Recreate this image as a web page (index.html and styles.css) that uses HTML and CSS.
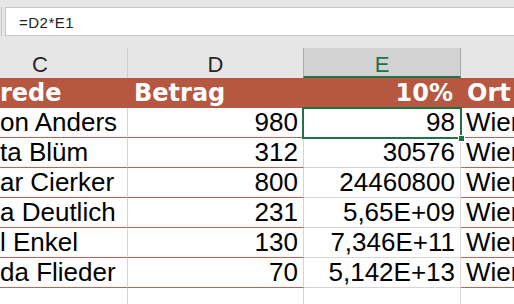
FILE: index.html
```html
<!DOCTYPE html>
<html>

<head>
    <meta charset="utf-8">
    <title>Tabelle</title>
    <link rel="stylesheet" href="styles.css">
</head>

<body>
    <div class="top">
        <div class="fx-edge"></div>
        <div class="formula">=D2*E1</div>
    </div>
    <div class="sheet">
        <div class="hd">C</div>
        <div class="hd">D</div>
        <div class="hd active">E</div>
        <div class="hd last"></div>

        <div class="cell title c">rede</div>
        <div class="cell title d">Betrag</div>
        <div class="cell title e">10%</div>
        <div class="cell title f">Ort</div>

        <div class="cell c">on Anders</div>
        <div class="cell d">980</div>
        <div class="cell e sel">98<span class="frame"><i class="handle"></i></span></div>
        <div class="cell f">Wien</div>

        <div class="cell c">ta Blüm</div>
        <div class="cell d">312</div>
        <div class="cell e">30576</div>
        <div class="cell f">Wien</div>

        <div class="cell c">ar Cierker</div>
        <div class="cell d">800</div>
        <div class="cell e">24460800</div>
        <div class="cell f">Wien</div>

        <div class="cell c">a Deutlich</div>
        <div class="cell d">231</div>
        <div class="cell e">5,65E+09</div>
        <div class="cell f">Wien</div>

        <div class="cell c">l Enkel</div>
        <div class="cell d">130</div>
        <div class="cell e">7,346E+11</div>
        <div class="cell f">Wien</div>

        <div class="cell c">da Flieder</div>
        <div class="cell d">70</div>
        <div class="cell e">5,142E+13</div>
        <div class="cell f">Wien</div>

        <div class="cell empty"></div>
        <div class="cell empty"></div>
        <div class="cell empty"></div>
        <div class="cell empty"></div>
    </div>
</body>

</html>
```

FILE: styles.css
```css
body {
    margin: 0;
    padding: 0;
    background: #fff;
    overflow: hidden;
    font-family: "Liberation Sans", Arial, sans-serif;
}

.top {
    display: flex;
    background: #e6e6e6;
    padding: 7px 0 12px 0;
}

.fx-edge {
    width: 1px;
    height: 29px;
    border-right: 1px solid #c6c6c6;
    margin-right: 3px;
}

.formula {
    flex: 1;
    box-sizing: border-box;
    height: 29px;
    line-height: 27px;
    padding: 1px 0 0 13px;
    background: #fff;
    border: 1px solid #c6c6c6;
    border-right: none;
    font-size: 15px;
    letter-spacing: 0.5px;
    color: #222;
}

.sheet {
    display: grid;
    grid-template-columns: 175px 176px 157px 120px;
    margin-left: -47px;
}

.hd {
    height: 30px;
    line-height: 34px;
    background: #e6e6e6;
    border-right: 1px solid #cdcdcd;
    text-align: center;
    font-size: 22px;
    color: #262626;
    overflow: hidden;
}

.hd.active {
    box-sizing: border-box;
    background: #d2d2d2;
    border-left: 1px solid #ababab;
    border-right: 1px solid #ababab;
    border-bottom: 2px solid #217346;
    margin-left: -1px;
    color: #217346;
}

.hd.last {
    border-right: none;
}

.cell {
    height: 29px;
    line-height: 29px;
    font-size: 26px;
    color: #000;
    white-space: nowrap;
    overflow: hidden;
    border-right: 1px solid #d4d4d4;
    border-bottom: 1px solid #c0634c;
}

.cell.e {
    border-bottom-color: #d4d4d4;
}

.cell.f {
    border-right: none;
}

.cell.c {
    padding-left: 47px;
}

.cell.d {
    text-align: right;
    padding-right: 5px;
}

.cell.e {
    text-align: right;
    padding-right: 5px;
}

.cell.f {
    padding-left: 5px;
}

.cell.title {
    height: 30px;
    line-height: 30px;
    background: #b65741;
    border-right-color: #b65741;
    border-bottom: none;
    color: #fff;
    font-family: "DejaVu Sans", Verdana, sans-serif;
    font-weight: bold;
    font-size: 24px;
}

.cell.title.c {
    padding-left: 47px;
}

.cell.title.d {
    text-align: left;
    padding-left: 6px;
}

.cell.title.e {
    padding-right: 7px;
}

.cell.title.f {
    padding-left: 6px;
}

.cell.sel {
    position: relative;
    overflow: visible;
}

.frame {
    position: absolute;
    top: -1px;
    left: -2px;
    right: -2px;
    bottom: -2px;
    border: 2px solid #217346;
}

.handle {
    position: absolute;
    right: -5px;
    bottom: -5px;
    width: 5px;
    height: 5px;
    background: #217346;
    border: 1px solid #fff;
}

.cell.empty {
    border-bottom-color: #d4d4d4;
}
```
